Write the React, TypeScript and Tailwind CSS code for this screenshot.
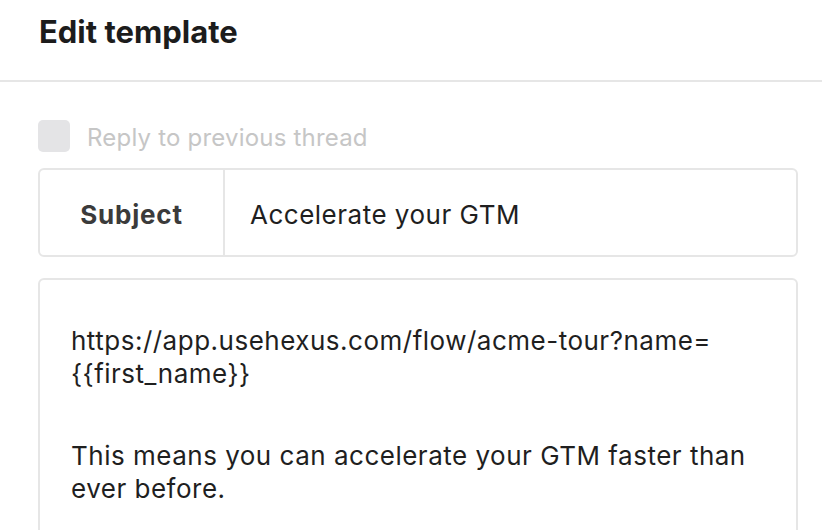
export default function App() {
  return (
    <div className="w-[822px] h-[530px] overflow-hidden bg-white font-['Inter',sans-serif] text-[#1f1f1f]">
      <header className="h-[82px] border-b-2 border-[#e6e6e6] px-[39px] pt-[11px]">
        <h1 className="text-[31px] leading-[42px] font-bold text-[#1c1c1c]">Edit template</h1>
      </header>

      <div className="px-[38px] pt-[38px]">
        <label className="flex items-center gap-[17px] h-8">
          <span className="w-8 h-8 rounded-[5px] bg-[#e4e4e6]" />
          <span className="pt-[3px] text-[24px] leading-[32px] tracking-[0.2px] text-[#c6c6c6]">Reply to previous thread</span>
        </label>

        <div className="mt-[16px] w-[760px] h-[89px] flex border-2 border-[#e6e6e6] rounded-[6px]">
          <div className="w-[185px] pt-[3px] border-r-2 border-[#e6e6e6] flex items-center justify-center text-[26px] tracking-[0.8px] font-bold text-[#3b3b3b]">
            Subject
          </div>
          <div className="flex-1 pt-[3px] flex items-center pl-[25px] text-[26px] tracking-[0.5px] text-[#1f1f1f]">
            Accelerate your GTM
          </div>
        </div>

        <div className="mt-[21px] w-[760px] h-[300px] border-2 border-[#e6e6e6] rounded-[6px] px-[31px] pt-[44px] text-[26px] tracking-[0.5px] leading-[33px] text-[#1f1f1f]">
          <p>https://app.usehexus.com/flow/acme-tour?name=<br />{'{{first_name}}'}</p>
          <p className="mt-[49px]">This means you can accelerate your GTM faster than<br />ever before.</p>
        </div>
      </div>
    </div>
  )
}
